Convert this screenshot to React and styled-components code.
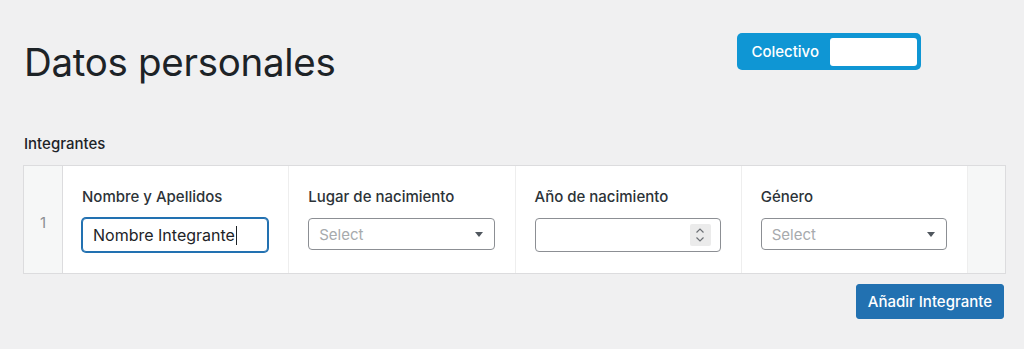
import React from "react"
import styled, { createGlobalStyle } from "styled-components"

const GlobalStyle = createGlobalStyle`
  body {
    margin: 0;
    background: #f0f0f1;
    font-family: Inter, "Noto Sans", sans-serif;
    color: #1d2327;
  }
`

const columns = [
  { label: "Nombre y Apellidos", kind: "text", value: "Nombre Integrante" },
  { label: "Lugar de nacimiento", kind: "select" },
  { label: "Año de nacimiento", kind: "number" },
  { label: "Género", kind: "select" },
]

const Field = ({ kind, value }) => {
  if (kind === "text")
    return (
      <TextBox>
        {value}
        <Caret />
      </TextBox>
    )
  if (kind === "number")
    return (
      <NumberBox>
        <Spinner>
          <svg width="12" height="18" viewBox="0 0 12 18">
            <path d="M2.5 6.5 L6 3 L9.5 6.5" fill="none" stroke="#6c7075" strokeWidth="1.2" />
            <path d="M2.5 11.5 L6 15 L9.5 11.5" fill="none" stroke="#6c7075" strokeWidth="1.2" />
          </svg>
        </Spinner>
      </NumberBox>
    )
  return (
    <SelectBox>
      Select
      <Arrow />
    </SelectBox>
  )
}

const App = () => (
  <Page>
    <GlobalStyle />
    <Header>
      <Title>Datos personales</Title>
      <Toggle>
        Colectivo
        <ToggleField />
      </Toggle>
    </Header>
    <SectionLabel>Integrantes</SectionLabel>
    <Table>
      <Handle>1</Handle>
      {columns.map(col => (
        <Cell key={col.label}>
          <CellLabel>{col.label}</CellLabel>
          <Field kind={col.kind} value={col.value} />
        </Cell>
      ))}
      <Side />
    </Table>
    <Footer>
      <Button>Añadir Integrante</Button>
    </Footer>
  </Page>
)
export default App

const Page = styled.div`
  padding: 33px 18px 30px 23px;
`

const Header = styled.div`
  display: flex;
  align-items: flex-start;
`

const Title = styled.h1`
  margin: 5px 0 0 1px;
  font-size: 38.5px;
  line-height: 48px;
  font-weight: 400;
  color: #1d2327;
  letter-spacing: -0.3px;
`

const Toggle = styled.div`
  margin-left: auto;
  margin-right: 85px;
  display: flex;
  align-items: center;
  gap: 11px;
  height: 37px;
  box-sizing: border-box;
  padding: 4px 4px 4px 14px;
  background: #0f96d4;
  border-radius: 5px;
  color: #fff;
  font-size: 15px;
  font-weight: 500;
`

const ToggleField = styled.div`
  width: 87px;
  height: 28px;
  background: #fff;
  border-radius: 3px;
`

const SectionLabel = styled.div`
  margin: 48px 0 11px 1px;
  font-size: 15px;
  line-height: 20px;
  font-weight: 500;
  color: #1d2327;
`

const Table = styled.div`
  display: grid;
  grid-template-columns: 39px repeat(4, 1fr) 37px;
  border: 1px solid #dcdcde;
  background: #fff;
`

const Handle = styled.div`
  display: flex;
  align-items: center;
  justify-content: center;
  background: #f6f7f7;
  border-right: 1px solid #dcdcde;
  color: #8c8f94;
  font-size: 15px;
  padding-top: 6px;
`

const Cell = styled.div`
  display: flex;
  flex-direction: column;
  padding: 21px 20px 21px 19px;
  border-right: 1px solid #eeeeee;
`

const Side = styled.div`
  background: #f6f7f7;
`

const CellLabel = styled.div`
  font-size: 15px;
  line-height: 20px;
  font-weight: 500;
  color: #2c3338;
  margin-bottom: 11px;
`

const BaseBox = styled.div`
  box-sizing: border-box;
  display: flex;
  align-items: center;
  border: 1px solid #8c8f94;
  border-radius: 4px;
  background: #fff;
  font-size: 15px;
  height: 32px;
`

const TextBox = styled(BaseBox)`
  height: 34px;
  padding: 0 10px;
  border-color: #2271b1;
  box-shadow: 0 0 0 1px #2271b1;
  color: #1d2327;
  font-size: 16px;
`

const Caret = styled.span`
  display: inline-block;
  width: 1px;
  height: 19px;
  margin-left: 1px;
  background: #1d2327;
`

const SelectBox = styled(BaseBox)`
  padding: 0 10px;
  justify-content: space-between;
  color: #a7aaad;
`

const Arrow = styled.span`
  width: 0;
  height: 0;
  margin-right: 1px;
  border-left: 4.5px solid transparent;
  border-right: 4.5px solid transparent;
  border-top: 5px solid #50575e;
`

const NumberBox = styled(BaseBox)`
  height: 34px;
  justify-content: flex-end;
  padding-right: 9px;
`

const Spinner = styled.div`
  width: 21px;
  height: 22px;
  display: flex;
  align-items: center;
  justify-content: center;
  background: #ebebeb;
  border-radius: 2px;
`

const Footer = styled.div`
  display: flex;
  justify-content: flex-end;
  padding: 10px 2px 0 0;
`

const Button = styled.button`
  height: 35px;
  padding: 0 11px;
  border: 1px solid #2271b1;
  border-radius: 3px;
  background: #2271b1;
  color: #fff;
  font-family: inherit;
  font-size: 15px;
  font-weight: 500;
`
